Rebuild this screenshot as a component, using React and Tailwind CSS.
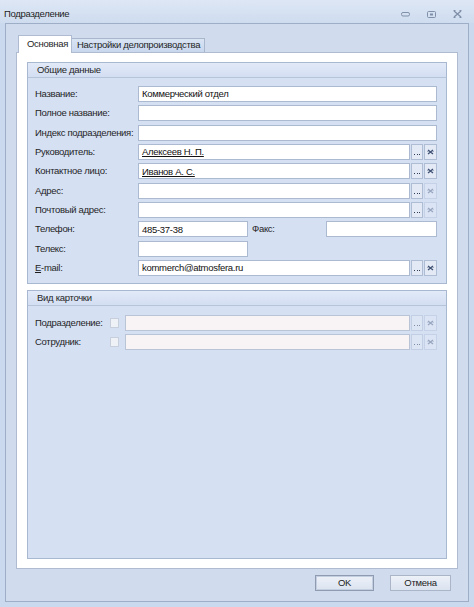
import React from 'react'

const font = { fontFamily: '"Liberation Sans", Arial, sans-serif' }

function Dots({ disabled }) {
  return (
    <div className={`w-[12px] h-4 border border-[#aebdd4] bg-[#e3eaf6] flex items-end justify-center pb-[4px] gap-[1.5px] ${disabled ? 'opacity-50' : ''}`}>
      <span className="w-px h-px bg-[#2f3d57]" />
      <span className="w-px h-px bg-[#2f3d57]" />
      <span className="w-px h-px bg-[#2f3d57]" />
    </div>
  )
}

function ClearBtn({ faded }) {
  return (
    <div className={`ml-px w-[13px] h-4 border border-[#aebdd4] bg-[#e3eaf6] flex items-center justify-center ${faded ? 'opacity-40' : ''}`}>
      <svg width="7" height="6" viewBox="0 0 7 6">
        <path d="M1 1 L6 5 M6 1 L1 5" stroke="#3f5073" strokeWidth="1.3" fill="none" />
        <path d="M0.5 2.5 L1.5 2 M5.5 2 L6.5 2.5" stroke="#3f5073" strokeWidth="0.8" />
      </svg>
    </div>
  )
}

function Input({ value, link, className = 'flex-1' }) {
  return (
    <div className={`${className} h-4 border border-[#abbad1] bg-white flex items-center pl-[3px] text-[#111] leading-none`}>
      {link ? <span className="underline">{value}</span> : value}
    </div>
  )
}

function Row({ label, children }) {
  return (
    <div className="flex items-center h-4">
      <div className="w-[103px] shrink-0 text-[#1f1f1f]">{label}</div>
      <div className="flex-1 flex h-4 items-center">{children}</div>
    </div>
  )
}

function Lookup({ value, link, faded }) {
  return (
    <>
      <Input value={value} link={link} />
      <div className="ml-px" />
      <Dots />
      <ClearBtn faded={faded} />
    </>
  )
}

function GroupHeader({ title }) {
  return (
    <div className="h-[15px] bg-gradient-to-b from-[#e2eaf8] to-[#d3def2] border-b border-[#b6c4da] flex items-center pl-[9px] text-[#1f1f1f]">
      {title}
    </div>
  )
}

function DisabledRow({ label }) {
  return (
    <div className="flex items-center h-4">
      <div className="w-[75px] shrink-0 text-[#1f1f1f]">{label}</div>
      <div className="w-[9px] h-[10px] border border-[#c7cfdc] bg-[#eef1f6]" />
      <div className="ml-[6px] flex-1 h-4 border border-[#b9c4d6] bg-[#f8f4f6]" />
      <div className="ml-px" />
      <Dots disabled />
      <ClearBtn faded />
    </div>
  )
}

export default function App() {
  return (
    <div className="w-[474px] h-[607px] bg-[#cad9ee] flex flex-col text-[9.5px] tracking-[-0.3px] whitespace-nowrap select-none" style={font}>
      {/* Title bar */}
      <div className="h-[23px] shrink-0 flex items-center pl-[4px] pr-[12px] bg-gradient-to-b from-[#dde7f5] to-[#cfdcef]">
        <span className="text-[#1d1d1d] text-[9.5px] mt-[6px]">Подразделение</span>
        <div className="ml-auto flex items-center gap-[17px] mt-[5px]">
          <svg width="9" height="5" viewBox="0 0 9 5">
            <rect x="0.5" y="0.5" width="8" height="3.5" rx="1.5" fill="none" stroke="#8090a8" />
          </svg>
          <svg width="9" height="7" viewBox="0 0 9 7">
            <rect x="0.5" y="0.5" width="8" height="6" rx="1" fill="none" stroke="#8090a8" />
            <rect x="3" y="2.5" width="3" height="2" fill="#8090a8" />
          </svg>
          <svg width="9" height="8" viewBox="0 0 9 8">
            <path d="M1 1 L8 7 M8 1 L1 7" stroke="#8090a8" strokeWidth="1.4" />
            <path d="M0.5 0.5 h2 M6.5 0.5 h2 M0.5 7.5 h2 M6.5 7.5 h2" stroke="#8090a8" />
          </svg>
        </div>
      </div>

      {/* Window body */}
      <div className="mx-[5px] mb-[5px] flex-1 border border-[#9eaec7] bg-[#d0dcee] flex flex-col px-[10px] pt-[11px]">
        {/* Tabs */}
        <div className="flex items-end h-[17px] ml-[2px]">
          <div className="w-[54px] h-[18px] -mb-px relative z-10 bg-white border border-[#aebbd0] border-b-0 pl-[8px] flex items-center text-[#1f1f1f]">
            Основная
          </div>
          <div className="w-[133px] h-[14px] bg-gradient-to-b from-[#d9e4f4] to-[#c9d7ee] border border-[#a9b7cd] border-b-0 border-l-0 pl-[5px] flex items-center text-[#1f1f1f]">
            Настройки делопроизводства
          </div>
        </div>

        {/* Tab page */}
        <div className="flex-1 bg-white border border-[#aebbd0] pt-[9px] px-[10px] pb-[9px] flex flex-col gap-[6px]">
          {/* Общие данные */}
          <div className="border border-[#a9b8d1] bg-[#d5e0f3]">
            <GroupHeader title="Общие данные" />
            <div className="pt-[8px] pb-[7px] pl-[7px] pr-[9px] flex flex-col gap-[3.33px]">
              <Row label="Название:"><Input value="Коммерческий отдел" /></Row>
              <Row label="Полное название:"><Input /></Row>
              <Row label="Индекс подразделения:"><Input /></Row>
              <Row label="Руководитель:"><Lookup value="Алексеев Н. П." link /></Row>
              <Row label="Контактное лицо:"><Lookup value="Иванов А. С." link /></Row>
              <Row label="Адрес:"><Lookup faded /></Row>
              <Row label="Почтовый адрес:"><Lookup faded /></Row>
              <Row label="Телефон:">
                <Input value="485-37-38" className="w-[110px]" />
                <span className="ml-[4px] w-[74px] text-[#1f1f1f]">Факс:</span>
                <Input />
              </Row>
              <Row label="Телекс:"><Input className="w-[110px]" /></Row>
              <Row label={<span><span className="underline">E</span>-mail:</span>}>
                <Lookup value="kommerch@atmosfera.ru" />
              </Row>
            </div>
          </div>

          {/* Вид карточки */}
          <div className="flex-1 border border-[#a9b8d1] bg-[#d5e0f3]">
            <GroupHeader title="Вид карточки" />
            <div className="pt-[9px] pl-[7px] pr-[9px] flex flex-col gap-[3px]">
              <DisabledRow label="Подразделение:" />
              <DisabledRow label="Сотрудник:" />
            </div>
          </div>
        </div>

        {/* Buttons */}
        <div className="h-[32px] shrink-0 flex items-start justify-end pt-[6px] pr-[7px] gap-[16px]">
          <button className="w-[59px] h-[16px] border border-[#8e9bb0] outline outline-1 outline-[#c3cee0] -outline-offset-2 bg-gradient-to-b from-[#edf1f8] to-[#dbe3f0] text-[#222] leading-none">
            OK
          </button>
          <button className="w-[61px] h-[16px] border border-[#aab6c8] bg-gradient-to-b from-[#edf1f8] to-[#dbe3f0] text-[#222] leading-none">
            Отмена
          </button>
        </div>
      </div>
    </div>
  )
}
